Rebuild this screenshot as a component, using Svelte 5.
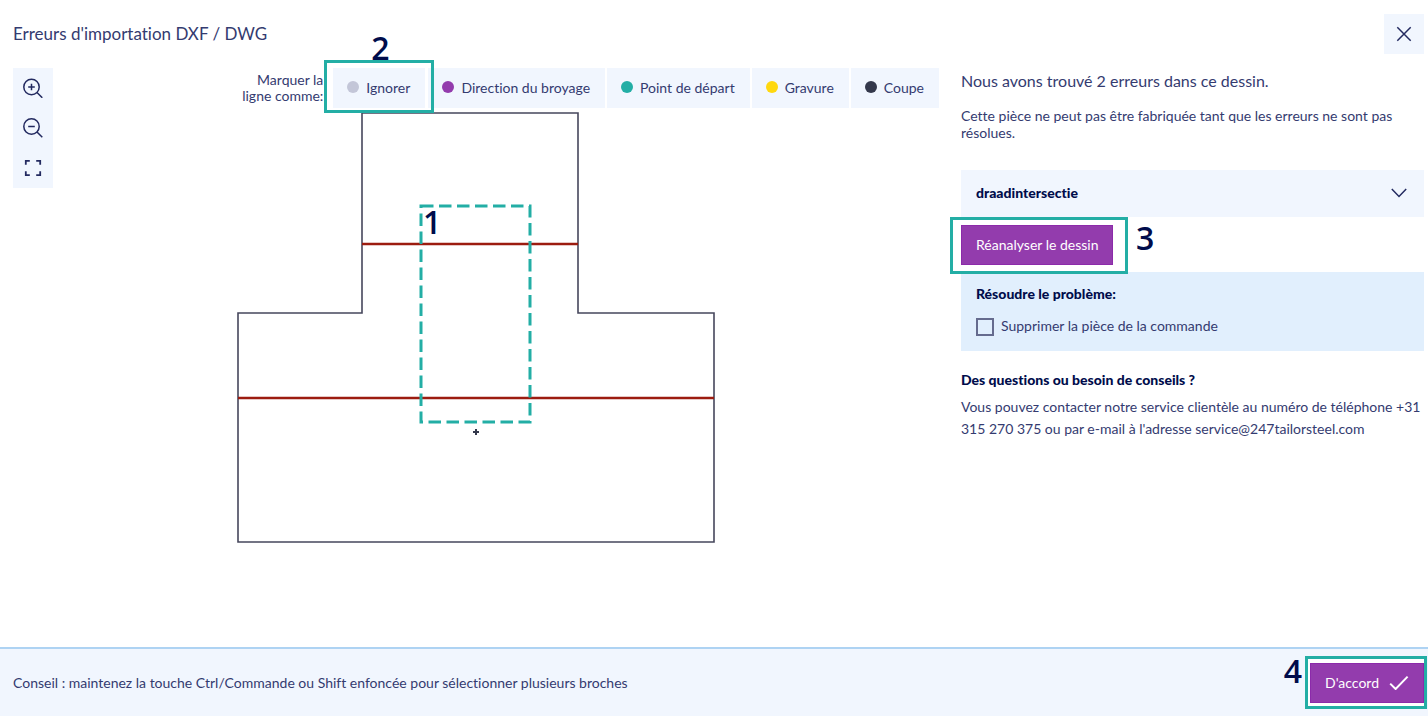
<script lang="ts">
  interface LineType {
    label: string;
    color: string;
  }

  const lineTypes: LineType[] = [
    { label: 'Ignorer', color: '#c3c6d8' },
    { label: 'Direction du broyage', color: '#933cad' },
    { label: 'Point de départ', color: '#23aea5' },
    { label: 'Gravure', color: '#ffd80f' },
    { label: 'Coupe', color: '#34384b' },
  ];

  let removePart = $state(false);
</script>

<div class="dialog">
  <header>
    <h1>Erreurs d'importation DXF / DWG</h1>
    <button class="close" aria-label="Fermer">
      <svg width="16" height="16" viewBox="0 0 16 16" aria-hidden="true">
        <path d="M1.3 1.3L14.7 14.7M14.7 1.3L1.3 14.7" />
      </svg>
    </button>
  </header>

  <main>
    <section class="editor">
      <div class="tools">
        <button aria-label="Zoom avant">
          <svg width="20" height="20" viewBox="0 0 20 20" aria-hidden="true">
            <circle cx="8.5" cy="9" r="7.7" />
            <path d="M14 14.5L19.3 19.8M8.5 5.7V12.3M5.2 9H11.8" />
          </svg>
        </button>
        <button aria-label="Zoom arrière">
          <svg width="20" height="20" viewBox="0 0 20 20" aria-hidden="true">
            <circle cx="8.5" cy="8.5" r="7.7" />
            <path d="M14 14L19.3 19.3M5.2 8.5H11.8" />
          </svg>
        </button>
        <button aria-label="Plein écran">
          <svg class="bold" width="20" height="20" viewBox="0 0 20 20" aria-hidden="true">
            <path d="M2.8 6.8V2.8H6.8M13.2 2.8H17.2V6.8M17.2 13.2V17.2H13.2M6.8 17.2H2.8V13.2" />
          </svg>
        </button>
      </div>

      <div class="legend">
        <span class="legend-label">Marquer la<br />ligne comme:</span>
        <div class="types">
          {#each lineTypes as type, i}
            <div class="type" class:marked={i === 0}>
              <button>
                <span class="dot" style="background-color: {type.color}"></span>
                {type.label}
              </button>
              {#if i === 0}
                <span class="step step-2">2</span>
              {/if}
            </div>
          {/each}
        </div>
      </div>

      <svg class="drawing" viewBox="0 0 478 440" role="img" aria-label="Dessin de la pièce">
        <path class="outline" d="M125 5H341V205H477V434H1V205H125Z" />
        <path class="error" d="M125 136H341M1 290H477" />
        <rect class="selection" x="184" y="98" width="109" height="216" />
        <path class="origin" d="M236 324H242M239 321V327" />
        <text x="186" y="126">1</text>
      </svg>
    </section>

    <aside>
      <h2>Nous avons trouvé 2 erreurs dans ce dessin.</h2>
      <p class="intro">Cette pièce ne peut pas être fabriquée tant que les erreurs ne sont pas résolues.</p>

      <button class="accordion" aria-expanded="false">
        draadintersectie
        <svg width="16" height="10" viewBox="0 0 16 10" aria-hidden="true">
          <path d="M0.8 1L8 8.4L15.2 1" />
        </svg>
      </button>

      <div class="reanalyse">
        <button class="primary">Réanalyser le dessin</button>
        <span class="step step-3">3</span>
      </div>

      <div class="resolve">
        <h3>Résoudre le problème:</h3>
        <label>
          <input type="checkbox" bind:checked={removePart} />
          <span>Supprimer la pièce de la commande</span>
        </label>
      </div>

      <h3>Des questions ou besoin de conseils ?</h3>
      <p class="contact">
        Vous pouvez contacter notre service clientèle au numéro de téléphone +31 315 270 375 ou par e-mail à
        l'adresse service@247tailorsteel.com
      </p>
    </aside>
  </main>

  <footer>
    <p>Conseil : maintenez la touche Ctrl/Commande ou Shift enfoncée pour sélectionner plusieurs broches</p>
    <div class="confirm">
      <span class="step step-4">4</span>
      <button class="primary">
        D'accord
        <svg width="20" height="16" viewBox="0 0 20 16" aria-hidden="true">
          <path d="M1.2 9.6L6.6 15L18.6 2.6" />
        </svg>
      </button>
    </div>
  </footer>
</div>

<style>
  :global(body) {
    margin: 0;
    background-color: #fff;
  }

  .dialog {
    --ink: #343b70;
    --strong: #000c4b;
    --surface: #f1f6fe;
    --teal: #23aea5;
    --purple: #933cad;

    display: flex;
    flex-direction: column;
    min-height: 100vh;
    color: var(--ink);
    font-family: Lato, sans-serif;
    font-size: 14px;
    font-variant-ligatures: none;
    line-height: 17px;
  }

  h1,
  h2,
  h3,
  p {
    margin: 0;
    font-size: 14px;
  }

  button {
    display: flex;
    align-items: center;
    padding: 0;
    border: 0;
    color: inherit;
    background-color: var(--surface);
    font: inherit;
    font-variant-ligatures: none;
    cursor: pointer;
  }

  svg {
    fill: none;
    stroke: #232a60;
    stroke-width: 1.5;
  }

  header {
    display: flex;
    align-items: center;
    justify-content: space-between;
    padding: 14px 4px 14px 13px;
  }

  h1 {
    font-size: 17px;
    font-weight: 400;
    line-height: 24px;
  }

  .close {
    justify-content: center;
    width: 40px;
    height: 40px;
  }

  main {
    display: grid;
    grid-template-columns: 2fr 1fr;
    gap: 22px;
    flex: 1;
    padding: 0 4px 0 13px;
  }

  .editor {
    display: grid;
    grid-template-columns: 40px 1fr;
    grid-template-rows: 40px 1fr;
    align-items: start;
  }

  .tools {
    grid-row: 1 / 3;
    grid-column: 1;
    z-index: 1;
  }

  .tools button {
    justify-content: center;
    width: 40px;
    height: 40px;
  }

  .tools .bold {
    stroke-width: 1.8;
  }

  .legend {
    display: flex;
    grid-row: 1;
    grid-column: 2;
    align-items: center;
    justify-content: flex-end;
    gap: 10px;
  }

  .legend-label {
    line-height: 16px;
    text-align: right;
  }

  .types {
    display: flex;
    gap: 2px;
  }

  .type {
    position: relative;
  }

  .type button {
    gap: 7px;
    height: 40px;
    padding: 0 15px 2px 14px;
    white-space: nowrap;
  }

  .marked {
    margin-right: 1px;
  }

  .marked::before {
    content: '';
    position: absolute;
    inset: -8px -9px -5px -9px;
    z-index: 1;
    border: 3px solid var(--teal);
    pointer-events: none;
  }

  .dot {
    width: 12px;
    height: 12px;
    border-radius: 50%;
  }

  .drawing {
    grid-row: 2;
    grid-column: 1 / 3;
    justify-self: center;
    width: 478px;
    max-width: 100%;
  }

  .outline {
    stroke: #46475c;
    stroke-width: 1.6;
  }

  .error {
    stroke: #9c1c10;
    stroke-width: 2.6;
  }

  .selection {
    stroke: var(--teal);
    stroke-width: 3;
    stroke-dasharray: 12.5 5.5;
  }

  .origin {
    stroke: #34384b;
    stroke-width: 2;
  }

  .drawing text,
  .step {
    color: var(--strong);
    font-family: 'Open Sans', sans-serif;
    font-size: 32px;
    font-weight: 600;
    line-height: 32px;
  }

  .drawing text {
    fill: var(--strong);
    stroke: none;
  }

  .step {
    position: absolute;
  }

  .step-2 {
    top: -36px;
    left: 38px;
  }

  .step-3 {
    top: 5px;
    left: 175px;
  }

  .step-4 {
    top: -8px;
    right: 122px;
  }

  aside {
    display: flex;
    flex-direction: column;
  }

  h2 {
    margin-top: 3px;
    font-size: 16px;
    font-weight: 400;
    line-height: 20px;
  }

  .intro {
    margin: 16px 0 29px;
  }

  .accordion {
    justify-content: space-between;
    height: 47px;
    padding: 0 17px 2px 15px;
    color: var(--strong);
    font-weight: 900;
  }

  h3 {
    color: var(--strong);
    font-weight: 900;
  }

  .reanalyse {
    position: relative;
    align-self: flex-start;
    z-index: 1;
    padding: 8px 0 7px;
  }

  .reanalyse::before {
    content: '';
    position: absolute;
    inset: 0 -15px -2px -11px;
    border: 3px solid var(--teal);
    pointer-events: none;
  }

  .primary {
    gap: 10px;
    height: 40px;
    padding: 0 14px 2px;
    border: 1px solid #8c2aaa;
    color: #fff;
    background-color: var(--purple);
    white-space: nowrap;
  }

  .primary svg {
    stroke: #fff;
    stroke-width: 2;
  }

  .resolve {
    margin-bottom: 20px;
    padding: 13px 15px 15px;
    background-color: #e1effd;
  }

  label {
    display: flex;
    align-items: center;
    gap: 7px;
    margin-top: 15px;
  }

  label span {
    padding-bottom: 2px;
  }

  input {
    appearance: none;
    width: 18px;
    height: 18px;
    margin: 0;
    border: 2px solid #656b8e;
    background-color: transparent;
  }

  input:checked {
    background-color: var(--purple);
  }

  .contact {
    margin-top: 8px;
    line-height: 22px;
  }

  footer {
    display: flex;
    align-items: center;
    justify-content: space-between;
    padding: 14px 4px 13px 13px;
    border-top: 2px solid #aed3f3;
    background-color: var(--surface);
  }

  footer p {
    padding-bottom: 2px;
  }

  .confirm {
    position: relative;
  }

  .confirm::before {
    content: '';
    position: absolute;
    inset: -7px -3px -6px -5px;
    border: 3px solid var(--teal);
    background-color: #fff;
  }

  .confirm .primary {
    position: relative;
  }
</style>
